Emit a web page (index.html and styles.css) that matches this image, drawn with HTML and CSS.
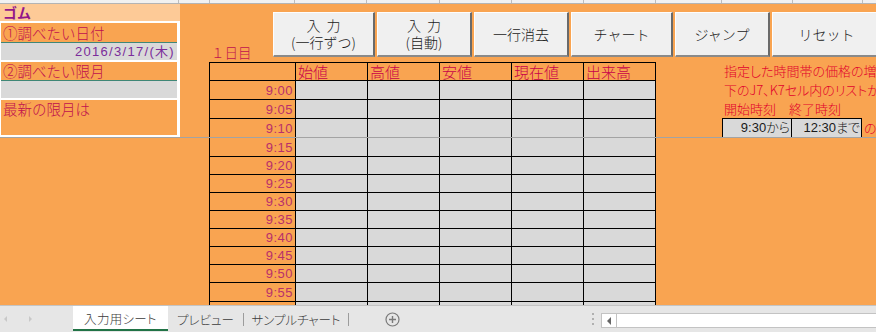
FILE: index.html
```html
<!DOCTYPE html>
<html lang="ja">
<head>
<meta charset="utf-8">
<title>入力用シート</title>
<link rel="stylesheet" href="styles.css">
</head>
<body>
<div class="app">
  <div class="colhead">
    <span class="ch w179"></span><span class="ch w31"></span><span class="ch w85"></span><span class="ch w72"></span><span class="ch w73"></span><span class="ch w72"></span><span class="ch w72"></span><span class="ch w72"></span><span class="ch w66"></span><span class="ch w71"></span><span class="ch w70"></span>
  </div>
  <div class="sheet">
    <div class="frozen">
      <div class="left">
        <div class="title">ゴム</div>
        <div class="box">
          <div class="lbl l1">①調べたい日付</div>
          <div class="teal"></div>
          <div class="val date">2016/3/17/(木)</div>
          <div class="wsep"></div>
          <div class="lbl l2">②調べたい限月</div>
          <div class="teal"></div>
          <div class="val"></div>
          <div class="wsep"></div>
          <div class="lbl l3">最新の限月は</div>
        </div>
      </div>
      <div class="center">
        <div class="toolbar">
          <div class="day">１日目</div>
          <div class="buttons">
            <div class="btn b1"><span>入&nbsp;&nbsp;力</span><span>(一行ずつ)</span></div>
            <div class="btn b2"><span>入&nbsp;&nbsp;力</span><span>(自動)</span></div>
            <div class="btn b3"><span>一行消去</span></div>
            <div class="btn b4"><span>チャート</span></div>
            <div class="btn b5"><span>ジャンプ</span></div>
            <div class="btn b6"><span>リセット</span></div>
          </div>
        </div>
        <div class="upper">
          <div class="tbl tbl-top">
            <div class="c tm"></div><div class="c hd">始値</div><div class="c hd">高値</div><div class="c hd">安値</div><div class="c hd">現在値</div><div class="c hd">出来高</div>
            <div class="c tm">9:00</div><div class="c d"></div><div class="c d"></div><div class="c d"></div><div class="c d"></div><div class="c d"></div>
            <div class="c tm">9:05</div><div class="c d"></div><div class="c d"></div><div class="c d"></div><div class="c d"></div><div class="c d"></div>
            <div class="c tm nb">9:10</div><div class="c d nb"></div><div class="c d nb"></div><div class="c d nb"></div><div class="c d nb"></div><div class="c d nb"></div>
          </div>
          <div class="notes">
            <div class="nl n1">指定した時間帯の価格の増減</div>
            <div class="nl n2">下のJ7、K7セル内のリストから</div>
            <div class="nl n3">開始時刻　終了時刻</div>
            <div class="nl n4"><span class="pick p1">9:30から</span><span class="pick p2">12:30まで</span><span class="no">の</span></div>
          </div>
        </div>
      </div>
    </div>
    <div class="divider"></div>
    <div class="lower">
      <div class="tbl tbl-bottom">
        <div class="c tm">9:15</div><div class="c d"></div><div class="c d"></div><div class="c d"></div><div class="c d"></div><div class="c d"></div>
        <div class="c tm">9:20</div><div class="c d"></div><div class="c d"></div><div class="c d"></div><div class="c d"></div><div class="c d"></div>
        <div class="c tm">9:25</div><div class="c d"></div><div class="c d"></div><div class="c d"></div><div class="c d"></div><div class="c d"></div>
        <div class="c tm">9:30</div><div class="c d"></div><div class="c d"></div><div class="c d"></div><div class="c d"></div><div class="c d"></div>
        <div class="c tm">9:35</div><div class="c d"></div><div class="c d"></div><div class="c d"></div><div class="c d"></div><div class="c d"></div>
        <div class="c tm">9:40</div><div class="c d"></div><div class="c d"></div><div class="c d"></div><div class="c d"></div><div class="c d"></div>
        <div class="c tm">9:45</div><div class="c d"></div><div class="c d"></div><div class="c d"></div><div class="c d"></div><div class="c d"></div>
        <div class="c tm">9:50</div><div class="c d"></div><div class="c d"></div><div class="c d"></div><div class="c d"></div><div class="c d"></div>
        <div class="c tm">9:55</div><div class="c d"></div><div class="c d"></div><div class="c d"></div><div class="c d"></div><div class="c d"></div>
        <div class="c tm"></div><div class="c d"></div><div class="c d"></div><div class="c d"></div><div class="c d"></div><div class="c d"></div>
      </div>
    </div>
  </div>
  <div class="tabs">
    <div class="nav"><span class="tri tl"></span><span class="tri tr"></span></div>
    <div class="tab active">入力用シート</div>
    <div class="tab t2">プレビュー</div>
    <div class="tsep"></div>
    <div class="tab t3">サンプルチャート</div>
    <div class="tsep"></div>
    <div class="add">
      <svg width="15" height="15" viewBox="0 0 15 15"><circle cx="7.5" cy="7.5" r="6.5" fill="none" stroke="#7a7a7a" stroke-width="1.2"/><path d="M7.5 4v7M4 7.5h7" stroke="#7a7a7a" stroke-width="1.4"/></svg>
    </div>
    <div class="spacer"></div>
    <div class="dots"><i></i><i></i><i></i></div>
    <div class="hscroll">
      <div class="sbtn"><span class="sarrow"></span></div>
      <div class="strack"></div>
    </div>
  </div>
</div>
</body>
</html>
```

FILE: styles.css
```css
html, body {
  margin: 0;
  padding: 0;
}
body {
  width: 876px;
  height: 332px;
  overflow: hidden;
  font-family: "Liberation Sans", "Noto Sans CJK JP", sans-serif;
  background: #f9a451;
}
.app {
  display: flex;
  flex-direction: column;
  width: 876px;
  height: 332px;
}
.colhead {
  flex: none;
  height: 3px;
  display: flex;
  background: #f1f1f1;
  border-bottom: 1px solid #b4b4b4;
  overflow: hidden;
}
.ch {
  flex: none;
  box-sizing: border-box;
  height: 3px;
  border-right: 1px solid #bdbdbd;
}
.w179 { width: 179px; }
.w31 { width: 31px; }
.w85 { width: 85px; }
.w72 { width: 72px; }
.w73 { width: 73px; }
.w66 { width: 66px; }
.w71 { width: 71px; }
.w70 { width: 70px; }

.sheet {
  flex: 1;
  display: flex;
  flex-direction: column;
  background: #f9a451;
  overflow: hidden;
}
.frozen {
  flex: none;
  height: 133px;
  display: flex;
}
.left {
  flex: none;
  width: 180px;
  display: flex;
  flex-direction: column;
}
.title {
  height: 17px;
  background: #fdca97;
  color: #93168a;
  font-family: "Noto Sans CJK JP", sans-serif;
  font-weight: bold;
  font-size: 14px;
  line-height: 17px;
  padding-left: 3px;
}
.box {
  flex: 1;
  display: flex;
  flex-direction: column;
  border-style: solid;
  border-color: #ffffff;
  border-width: 2px 3px 2px 1px;
}
.lbl {
  font-family: "Noto Sans CJK JP", sans-serif;
  font-weight: 300;
  font-size: 14.5px;
  color: #c0104e;
  padding-left: 2px;
  white-space: nowrap;
}
.l1 { height: 19px; line-height: 20px; }
.l2 { height: 18px; line-height: 18px; }
.l3 { height: 35px; line-height: 18px; }
.teal {
  height: 1px;
  background: #3f8777;
}
.val {
  height: 17px;
  background: #d9d9d9;
}
.date {
  text-align: right;
  color: #7b2d9b;
  font-size: 13px;
  letter-spacing: 1.3px;
  line-height: 18px;
  padding-right: 2px;
}
.wsep {
  height: 2px;
  background: #ffffff;
}

.center {
  flex: 1;
  display: flex;
  flex-direction: column;
  min-width: 0;
}
.toolbar {
  flex: none;
  height: 58px;
  display: flex;
}
.day {
  flex: none;
  width: 62px;
  margin-left: 31px;
  align-self: flex-end;
  font-family: "Noto Sans CJK JP", sans-serif;
  font-weight: 300;
  font-size: 13.5px;
  line-height: 17px;
  color: #c0104e;
  padding-bottom: 1px;
}
.buttons {
  display: flex;
  gap: 2px;
  margin-top: 8px;
  height: 45px;
}
.btn {
  flex: none;
  box-sizing: border-box;
  height: 45px;
  background: #f0f0f0;
  border-style: solid;
  border-width: 1px 2px 2px 1px;
  border-color: #fdfdfd #6a6a6a #8a8a8a #fdfdfd;
  display: flex;
  flex-direction: column;
  align-items: center;
  justify-content: center;
  font-family: "Noto Sans CJK JP", sans-serif;
  font-weight: 300;
  font-size: 14px;
  line-height: 17px;
  color: #1a1a1a;
  white-space: nowrap;
}
.b1 { width: 102px; }
.b2 { width: 95px; }
.b3 { width: 95px; }
.b4 { width: 102px; }
.b5 { width: 95px; }
.b6 { width: 110px; }

.upper {
  flex: 1;
  display: flex;
}
.tbl {
  flex: none;
  display: grid;
  grid-template-columns: 86px repeat(5, 72px);
  border-left: 1px solid #000;
}
.tbl-top {
  margin-left: 29px;
  border-top: 1px solid #000;
  grid-template-rows: 18px 19px 19px 18px;
}
.tbl-bottom {
  grid-template-rows: 19px 18px 18px 18px 18px 18px 18px 18px 19px 18px;
}
.c {
  box-sizing: border-box;
  border-right: 1px solid #000;
  border-bottom: 1px solid #000;
  white-space: nowrap;
}
.c.nb { border-bottom: none; }
.tm {
  background: #f9a451;
  color: #b8306b;
  text-align: right;
  font-size: 13px;
  letter-spacing: 0.5px;
  padding-right: 2px;
  display: flex;
  align-items: center;
  justify-content: flex-end;
}
.hd {
  background: #f9a451;
  color: #c8004a;
  font-family: "Noto Sans CJK JP", sans-serif;
  font-weight: 300;
  font-size: 15px;
  line-height: 17px;
  padding-left: 2px;
}
.d {
  background: #d9d9d9;
}

.notes {
  flex: none;
  margin-left: 66px;
  display: flex;
  flex-direction: column;
  font-family: "Noto Sans CJK JP", sans-serif;
  font-weight: 300;
  font-feature-settings: "palt" 1;
  font-size: 13px;
  color: #e2002c;
  white-space: nowrap;
}
.nl { padding-left: 2px; }
.n1 { height: 18px; line-height: 18px; }
.n2 { height: 19px; line-height: 19px; }
.n3 { height: 19px; line-height: 19px; font-feature-settings: normal; }
.n4 {
  height: 19px;
  padding-left: 0;
  display: flex;
}
.pick {
  box-sizing: border-box;
  height: 19px;
  background: #d9d9d9;
  border-top: 1px solid #000;
  border-right: 1px solid #000;
  color: #1a1a1a;
  text-align: right;
  font-family: "Liberation Sans", "Noto Sans CJK JP", sans-serif;
  font-size: 13px;
  line-height: 18px;
  padding-right: 1px;
}
.p1 {
  width: 70px;
  border-left: 1px solid #000;
}
.p2 { width: 70px; }
.no {
  padding-left: 2px;
  line-height: 20px;
}

.divider {
  flex: none;
  height: 1px;
  background: #a3a3a3;
}
.lower {
  flex: 1;
  overflow: hidden;
  padding-left: 209px;
}

.tabs {
  flex: none;
  box-sizing: border-box;
  height: 27px;
  background: #e6e6e6;
  border-top: 1px solid #c4c4c4;
  display: flex;
  align-items: stretch;
  font-family: "Noto Sans CJK JP", sans-serif;
  font-weight: 300;
  font-feature-settings: "palt" 1;
  font-size: 12.5px;
  color: #3c3c3c;
}
.nav {
  flex: none;
  width: 73px;
  display: flex;
  align-items: center;
}
.tri {
  width: 0;
  height: 0;
  border-top: 3px solid transparent;
  border-bottom: 3px solid transparent;
}
.tl {
  margin-left: 4px;
  border-right: 3px solid #c8c8c8;
}
.tr {
  margin-left: 22px;
  border-left: 3px solid #c8c8c8;
}
.tab {
  flex: none;
  display: flex;
  align-items: center;
  justify-content: center;
  white-space: nowrap;
  padding-top: 1px;
}
.tab.active {
  width: 95px;
  background: #ffffff;
  border-bottom: 2px solid #217346;
  box-sizing: border-box;
  margin-bottom: 1px;
  letter-spacing: 0.3px;
}
.t2 { width: 75px; }
.t3 { width: 104px; }
.tsep {
  flex: none;
  width: 1px;
  height: 13px;
  align-self: center;
  background: #9c9c9c;
}
.add {
  flex: none;
  width: 86px;
  display: flex;
  align-items: center;
  justify-content: center;
}
.spacer {
  flex: none;
  width: 150px;
}
.dots {
  flex: none;
  width: 16px;
  display: flex;
  flex-direction: column;
  align-items: center;
  justify-content: center;
  gap: 3px;
}
.dots i {
  display: block;
  width: 2px;
  height: 2px;
  background: #b0b0b0;
}
.hscroll {
  flex: 1;
  display: flex;
  margin: 7px 0 4px 0;
  box-sizing: border-box;
  border: 1px solid #c3c3c3;
  border-right: none;
  background: #ffffff;
}
.sbtn {
  flex: none;
  width: 14px;
  border-right: 1px solid #c3c3c3;
  display: flex;
  align-items: center;
  justify-content: center;
}
.sarrow {
  width: 0;
  height: 0;
  border-top: 4px solid transparent;
  border-bottom: 4px solid transparent;
  border-right: 4px solid #666;
}
.strack { flex: 1; }
```
